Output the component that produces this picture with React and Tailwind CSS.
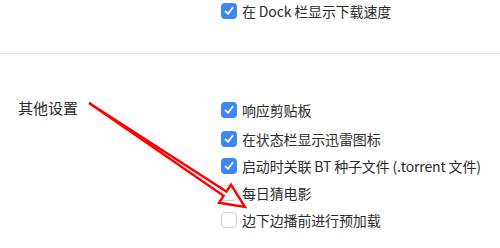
import React from "react";

const font = { fontFamily: '"Noto Sans CJK SC", "Noto Sans", sans-serif' };

const Check = ({ checked }) =>
  checked ? (
    <span className="flex h-[16px] w-[16px] shrink-0 items-center justify-center rounded-[4px] bg-[#3b87f6]">
      <svg width="12" height="12" viewBox="0 0 12 12">
        <path d="M2.6 6.4 L5 8.9 L9.6 2.8" fill="none" stroke="#fff" strokeWidth="1.8" strokeLinecap="round" strokeLinejoin="round" />
      </svg>
    </span>
  ) : (
    <span className="h-[16px] w-[16px] shrink-0 rounded-[4px] border border-[#cfcfcf] bg-white" />
  );

const Option = ({ checked, label, className = "" }) => (
  <div className={"flex h-[20px] items-center " + className}>
    <Check checked={checked} />
    <span className="ml-[5px] text-[14px] leading-[20px] tracking-[-0.15px] text-[#2b2b2b]">{label}</span>
  </div>
);

const App = () => {
  return (
    <div className="relative h-[248px] w-[500px] overflow-hidden bg-white" style={font}>
      {/* top section */}
      <div className="pl-[221px] pt-[1px] h-[53px]">
        <Option checked label="在 Dock 栏显示下载速度" />
      </div>
      <div className="h-px w-full bg-[#e6e6e6]" />

      {/* other settings */}
      <div className="flex pt-[46px]">
        <div className="w-[221px] pl-[18px] text-[15px] leading-[16px] text-[#2b2b2b]">
          其他设置
        </div>
        <div className="flex flex-col gap-[7px]">
          <Option checked label="响应剪贴板" className="mb-[2px]" />
          <Option checked label="在状态栏显示迅雷图标" />
          <Option checked label="启动时关联 BT 种子文件 (.torrent 文件)" />
          <Option checked={false} label="每日猜电影" />
          <Option checked={false} label="边下边播前进行预加载" />
        </div>
      </div>

      {/* annotation arrow */}
      <svg className="absolute left-0 top-0 pointer-events-none" width="500" height="248">
        <polygon
          points="89,103 226.4,191.6 231,184.6 245,207 219,202.8 223.6,195.8"
          fill="none"
          stroke="#ff0000"
          strokeWidth="2.4"
          strokeLinejoin="miter"
        />
      </svg>
    </div>
  );
};

export default App;
